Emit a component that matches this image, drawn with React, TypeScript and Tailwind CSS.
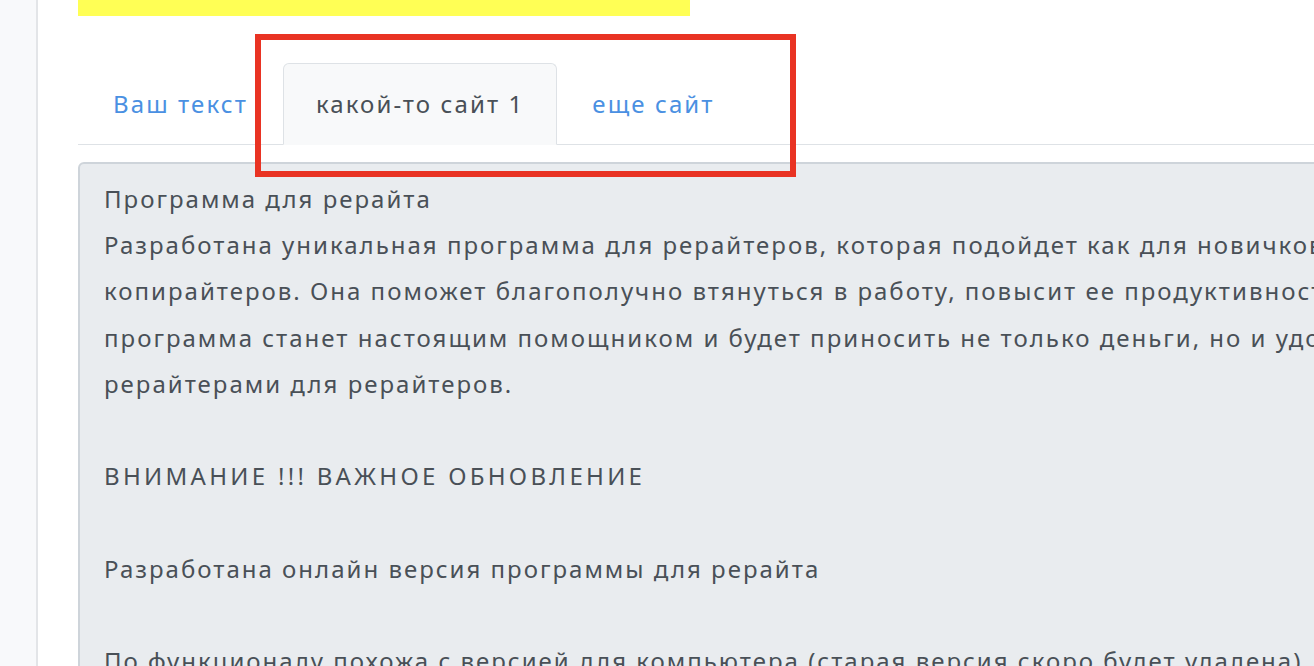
const lines = [
  "Программа для рерайта",
  "Разработана уникальная программа для рерайтеров, которая подойдет как для новичков, так и для опытных",
  "копирайтеров. Она поможет благополучно втянуться в работу, повысит ее продуктивность и качество. Наша",
  "программа станет настоящим помощником и будет приносить не только деньги, но и удовольствие. Создано",
  "рерайтерами для рерайтеров.",
  "",
  "ВНИМАНИЕ !!! ВАЖНОЕ ОБНОВЛЕНИЕ",
  "",
  "Разработана онлайн версия программы для рерайта",
  "",
  "По функционалу похожа с версией для компьютера (старая версия скоро будет удалена)",
];

const tabs = [
  { label: "Ваш текст", active: false },
  { label: "какой-то сайт 1", active: true },
  { label: "еще сайт", active: false },
];

export default function App() {
  return (
    <div
      className="relative flex h-[666px] w-full overflow-hidden bg-white"
      style={{ fontFamily: '"Noto Sans", "Open Sans", sans-serif' }}
    >
      {/* left sidebar strip */}
      <aside className="w-[38px] shrink-0 border-r-2 border-[#e3e5e8] bg-[#f8f9fb]" />

      <main className="min-w-0 flex-1 overflow-hidden pl-[40px]">
        <div className="h-[16px] w-[612px] bg-[#ffff55]" />

        <ul className="mt-[47px] flex w-[1400px] border-b border-[#dee2e6] text-[24px] tracking-[2.1px]">
          {tabs.map((t) => (
            <li key={t.label} className="-mb-px">
              <span
                className={
                  t.active
                    ? "block rounded-t-[6px] border border-[#dee2e6] border-b-[#f8f9fa] bg-[#f8f9fa] px-[32px] py-[22px] leading-[36px] text-[#495057]"
                    : "block border border-transparent px-[34px] py-[22px] leading-[36px] text-[#4a90e2]"
                }
              >
                {t.label}
              </span>
            </li>
          ))}
        </ul>

        <div className="mt-[17px] w-[1600px] rounded-tl-[6px] border-2 border-[#ced4da] bg-[#e9ecef] px-[24px] pt-[12px] pb-8 text-[24px] leading-[46.2px] tracking-[2px] text-[#495057]">
          {lines.map((l, i) => (
            <div
              key={i}
              className={
                l === l.toUpperCase() && l !== ""
                  ? "h-[46.2px] whitespace-nowrap tracking-[3.3px]"
                  : "h-[46.2px] whitespace-nowrap"
              }
            >
              {l}
            </div>
          ))}
        </div>
      </main>

      {/* red highlight annotation */}
      <div className="pointer-events-none absolute left-[255px] top-[34px] h-[143px] w-[541px] border-[6px] border-[#e93323]" />
    </div>
  );
}
